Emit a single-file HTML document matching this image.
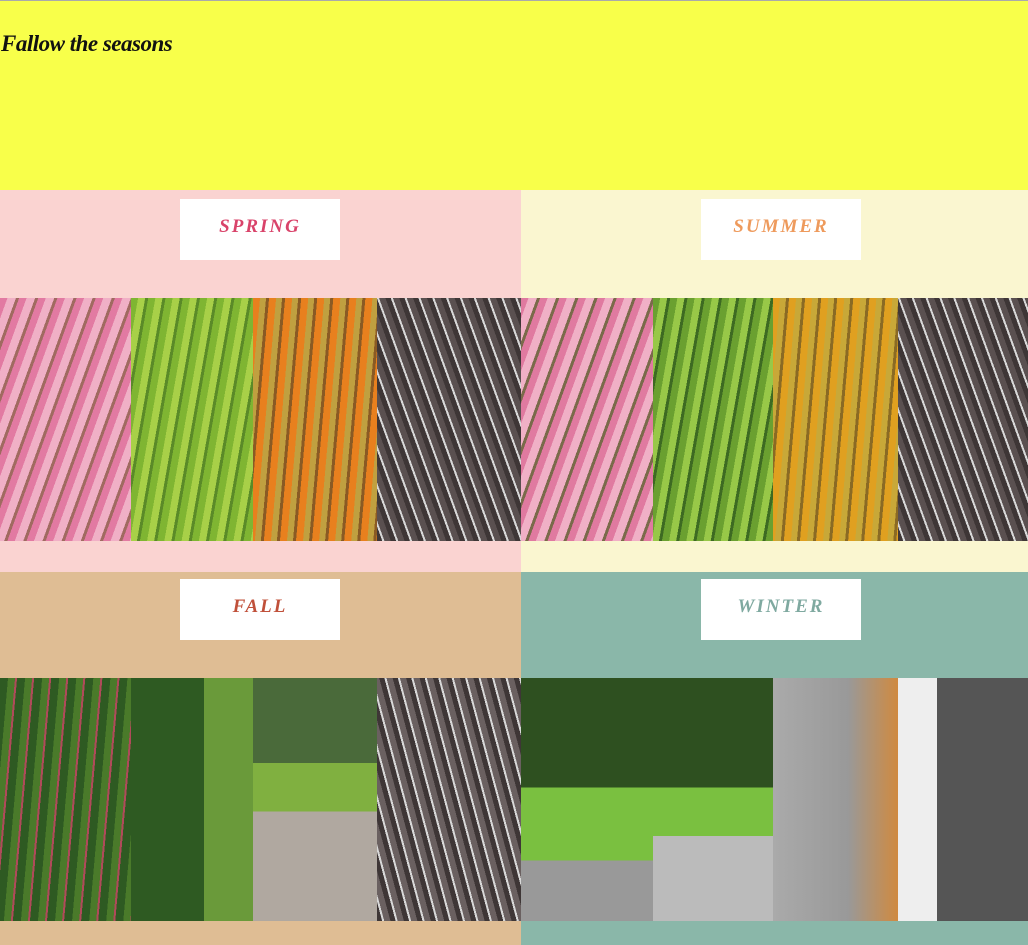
<!DOCTYPE html>
<html><head><style>
*{margin:0;padding:0;box-sizing:border-box}
body{width:1028px;height:945px;overflow:hidden;font-family:"Liberation Serif",serif;position:relative;background:#fff}
.top{position:absolute;left:0;top:0;width:1028px;height:190px;background:#f8ff4a;border-top:1px solid #aaa}
.top h1{position:absolute;left:1px;top:30px;font-size:23px;font-style:italic;font-weight:bold;font-family:"Liberation Serif",serif;letter-spacing:-0.5px;color:#111}
.q{position:absolute}
.ban{position:absolute;width:160px;height:61px;background:#fff;color:#d9436a;font-style:italic;font-weight:bold;font-size:19px;letter-spacing:2px;text-align:center;line-height:56px;padding-left:0}
.strip{position:absolute;height:243px;display:flex}
.strip div{height:100%}
</style></head><body>
<div class="top"><h1>Fallow the seasons</h1></div>

<div class="q" style="left:0;top:190px;width:521px;height:382px;background:#fad3d1"></div>
<div class="q" style="left:521px;top:190px;width:507px;height:382px;background:#faf6d0"></div>
<div class="q" style="left:0;top:572px;width:521px;height:373px;background:#dfbd94"></div>
<div class="q" style="left:521px;top:572px;width:507px;height:373px;background:#8ab7a9"></div>

<div class="ban" style="left:180px;top:199px">SPRING</div>
<div class="ban" style="left:701px;top:199px;color:#ee9a5c">SUMMER</div>
<div class="ban" style="left:180px;top:579px;color:#c0503a">FALL</div>
<div class="ban" style="left:701px;top:579px;color:#7fa9a0">WINTER</div>

<div class="strip" style="left:0;top:298px;width:521px">
<div style="width:131px;background:repeating-linear-gradient(110deg,#e27aa2 0 7px,#f0b0c6 7px 15px,#a06a60 15px 18px)"></div>
<div style="width:122px;background:repeating-linear-gradient(100deg,#7fb532 0 7px,#a8d048 7px 14px,#5a8a28 14px 17px)"></div>
<div style="width:124px;background:repeating-linear-gradient(95deg,#e8801e 0 7px,#c0a040 7px 13px,#8a5a24 13px 16px)"></div>
<div style="width:144px;background:repeating-linear-gradient(70deg,#3e3636 0 5px,#d8d8d8 5px 7px,#5a5050 7px 13px)"></div>
</div>
<div class="strip" style="left:521px;top:298px;width:507px">
<div style="width:132px;background:repeating-linear-gradient(110deg,#e07aa0 0 7px,#f0b0c6 7px 15px,#7a6a4a 15px 18px)"></div>
<div style="width:120px;background:repeating-linear-gradient(100deg,#6aa030 0 7px,#98c848 7px 14px,#3d6a22 14px 17px)"></div>
<div style="width:125px;background:repeating-linear-gradient(95deg,#e0a020 0 7px,#c8a838 7px 13px,#8a6a24 13px 16px)"></div>
<div style="width:130px;background:repeating-linear-gradient(70deg,#3e3636 0 5px,#d8d8d8 5px 7px,#5a5050 7px 13px)"></div>
</div>
<div class="strip" style="left:0;top:678px;width:521px">
<div style="width:131px;background:repeating-linear-gradient(95deg,#2e5a22 0 8px,#4a7a2a 8px 15px,#b04a5a 15px 17px)"></div>
<div style="width:122px;background:linear-gradient(90deg,#2e5a22 0 60%,#6a9a3a 60%)"></div>
<div style="width:124px;background:linear-gradient(#4a6a3a 0 35%,#80b040 35% 55%,#b0a8a0 55%)"></div>
<div style="width:144px;background:repeating-linear-gradient(75deg,#3e3636 0 5px,#d8d8d8 5px 7px,#6a6060 7px 13px)"></div>
</div>
<div class="strip" style="left:521px;top:678px;width:507px">
<div style="width:132px;background:linear-gradient(#2e5020 0 45%,#7ac040 45% 75%,#999 75%)"></div>
<div style="width:120px;background:linear-gradient(#2e5020 0 45%,#7ac040 45% 65%,#bbb 65%)"></div>
<div style="width:125px;background:linear-gradient(90deg,#aaa,#999 60%,#d08a40)"></div>
<div style="width:130px;background:linear-gradient(90deg,#eee 0 30%,#555 30%)"></div>
</div>
</body></html>
